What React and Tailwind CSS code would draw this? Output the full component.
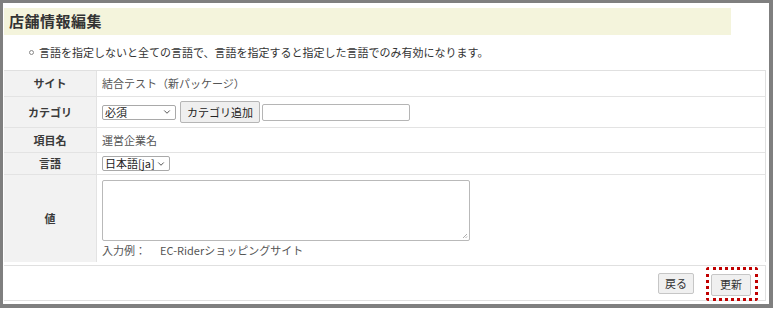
import { ChevronDown } from 'lucide-react';

const font = { fontFamily: '"Noto Sans CJK JP", "Noto Sans", sans-serif' };

function Row({ label, h, children, last = false }) {
    return (
        <div className={`flex ${h} ${last ? '' : 'border-b border-[#e3e3e3]'}`}>
            <div className="w-[93px] shrink-0 flex items-center justify-center bg-[#f2f2f2] border-r border-[#e3e3e3] text-[11px] font-bold text-[#3a3a3a]">
                {label}
            </div>
            <div className="flex-1 flex items-center pl-[5px] text-[11px] text-[#555]">{children}</div>
        </div>
    );
}

function FakeSelect({ value, w }) {
    return (
        <div className={`${w} h-[15px] flex items-center justify-between border border-[#a9a9a9] rounded-[2px] bg-white pl-[2px] pr-[3px] text-[11px] text-[#222] leading-none`}>
            <span>{value}</span>
            <ChevronDown size={10} strokeWidth={2} className="text-[#333]" />
        </div>
    );
}

export default function App() {
    return (
        <div style={font} className="w-[773px] h-[308px] bg-white border-t-[3px] border-l-[3px] border-r-[4px] border-b-[4px] border-[#7f7f7f] overflow-hidden">
            <div className="ml-px mt-[5px] w-[727px] h-[27px] bg-[#f4f4dc] flex items-center pl-[5px]">
                <h1 className="text-[15px] font-bold text-[#333] tracking-[0.5px]">店舗情報編集</h1>
            </div>

            <div className="mt-[9px] h-[16px] flex items-center pl-[26px] text-[11px] text-[#333]">
                <span className="w-[5px] h-[5px] rounded-full border border-[#888] mr-[5px]" />
                <span>言語を指定しないと全ての言語で、言語を指定すると指定した言語でのみ有効になります。</span>
            </div>

            <div className="mt-[10px] ml-px w-[762px] border-t border-r border-[#e0e0e0]">
                <Row label="サイト" h="h-[26px]">結合テスト（新パッケージ）</Row>
                <Row label="カテゴリ" h="h-[31px]">
                    <FakeSelect value="必須" w="w-[74px]" />
                    <button className="ml-[4px] h-[22px] px-[6px] border border-[#b5b5b5] rounded-[2px] bg-[#efefef] text-[11px] text-[#222]">
                        カテゴリ追加
                    </button>
                    <div className="ml-[2px] w-[148px] h-[17px] border border-[#b5b5b5] rounded-[2px] bg-white" />
                </Row>
                <Row label="項目名" h="h-[25px]">運営企業名</Row>
                <Row label="言語" h="h-[22px]">
                    <FakeSelect value="日本語[ja]" w="w-[68px]" />
                </Row>
                <Row label="値" h="h-[87px]" last>
                    <div className="flex flex-col self-start pt-[5px]">
                        <div className="relative w-[368px] h-[61px] border border-[#b9b9b9] rounded-[2px] bg-white">
                            <svg className="absolute right-[1px] bottom-[1px]" width="6" height="6" viewBox="0 0 6 6">
                                <path d="M5 1 L1 5 M5 3.5 L3.5 5" stroke="#999" strokeWidth="0.8" />
                            </svg>
                        </div>
                        <div className="mt-[1px] text-[11px] text-[#555]">
                            入力例：<span className="ml-[14px]">EC-Riderショッピングサイト</span>
                        </div>
                    </div>
                </Row>
            </div>

            <div className="mt-[3px] ml-px w-[762px] h-[36px] border-t border-b border-r border-[#e0e0e0] flex items-center justify-end pr-[14px]">
                <button className="h-[21px] px-[6px] border border-[#c6c6c6] rounded-[2px] bg-[#f0f0f0] text-[11px] text-[#333]">
                    戻る
                </button>
                <span className="relative ml-[17px]">
                    <button className="h-[22px] px-[8px] border border-[#c6c6c6] rounded-[2px] bg-[#f0f0f0] text-[11px] text-[#333]">
                        更新
                    </button>
                    <span className="absolute -left-[5px] -right-[7px] -top-[3px] -bottom-[5px] border-[3px] border-dotted border-[#c00000] rounded-[3px]" />
                </span>
            </div>
        </div>
    );
}
